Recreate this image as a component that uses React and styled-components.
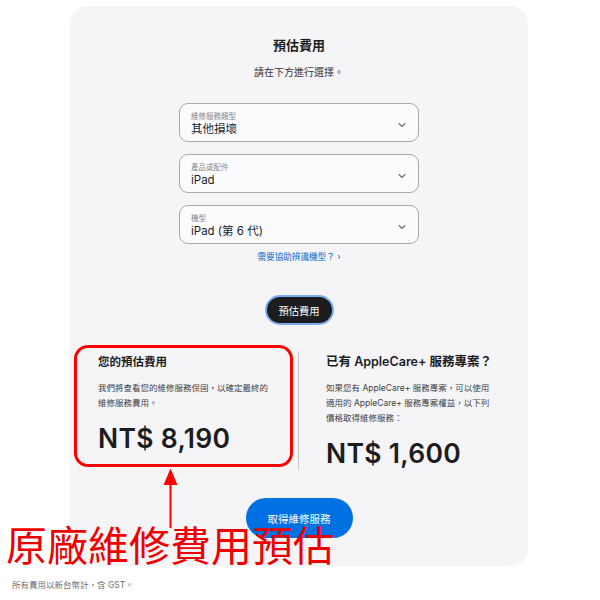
import React from "react";
import styled, { createGlobalStyle } from "styled-components";

const Global = createGlobalStyle`
  html, body { margin: 0; padding: 0; background: #fff; }
  body { font-family: "Inter", "Noto Sans CJK TC", sans-serif; color: #1d1d1f; }
`;

const Page = styled.div`
  position: relative;
  width: 600px;
  height: 600px;
  overflow: hidden;
  padding-top: 6px;
  box-sizing: border-box;
`;

const Card = styled.div`
  margin-left: 70px;
  width: 458px;
  height: 560px;
  box-sizing: border-box;
  border-radius: 18px;
  background: #f5f5f7;
  padding-top: 29px;
  display: flex;
  flex-direction: column;
  align-items: center;
`;

const Title = styled.h2`
  margin: 0;
  font-size: 13px;
  line-height: 20px;
  font-weight: 700;
`;

const Subtitle = styled.p`
  margin: 9px 0 0;
  font-size: 10px;
  line-height: 16px;
  color: #333336;
`;

const Fields = styled.div`
  margin-top: 23px;
  display: flex;
  flex-direction: column;
  gap: 12px;
`;

const Select = styled.div`
  width: 240px;
  height: 39px;
  box-sizing: border-box;
  border: 1px solid #a9a9ae;
  border-radius: 9px;
  background: #fbfbfd;
  padding: 7px 0 0 11px;
  display: flex;
  align-items: flex-start;
  justify-content: space-between;
`;

const FieldText = styled.div`
  display: flex;
  flex-direction: column;
`;

const FieldLabel = styled.span`
  font-size: 7.5px;
  line-height: 12px;
  color: #86868b;
`;

const FieldValue = styled.span`
  font-size: 11.5px;
  line-height: 13px;
  color: #1d1d1f;
`;

const Chevron = styled.svg`
  margin: 11px 12px 0 0;
  width: 8px;
  height: 6px;
`;

const HelpLink = styled.a`
  margin-top: 6px;
  font-size: 8.6px;
  line-height: 14px;
  color: #0066cc;
  text-decoration: none;
`;

const DarkButton = styled.button`
  margin-top: 31px;
  width: 69px;
  height: 30px;
  box-sizing: border-box;
  border-radius: 15px;
  border: 2px solid #79acf4;
  background: #1d1d1f;
  color: #fff;
  font-family: inherit;
  font-size: 10.3px;
  padding: 0;
`;

const Results = styled.div`
  margin-top: 26px;
  width: 100%;
  box-sizing: border-box;
  padding: 0 28px;
  display: grid;
  grid-template-columns: 173px 1px 1fr;
  column-gap: 27px;
  height: 119px;
`;

const Column = styled.div`
  padding-top: 2px;
  display: flex;
  flex-direction: column;
`;

const Divider = styled.div`
  background: #c7c7cc;
`;

const ColTitle = styled.h3`
  margin: 0;
  font-size: ${(p) => p.$size}px;
  line-height: 18px;
  font-weight: 600;
  white-space: nowrap;
`;

const ColText = styled.p`
  margin: 9.5px 0 0;
  font-size: 8.5px;
  line-height: 15px;
  color: #424245;
`;

const Price = styled.div`
  margin-top: 11px;
  font-size: 26.5px;
  line-height: 32px;
  font-weight: 600;
  letter-spacing: 0.3px;
  white-space: nowrap;
`;

const BlueButton = styled.button`
  margin-top: 28px;
  width: 107px;
  height: 40px;
  border: none;
  border-radius: 20px;
  background: #0071e3;
  color: #fff;
  font-family: inherit;
  font-size: 10.5px;
  padding: 0;
`;

const Footer = styled.p`
  margin: 12px 0 0 12px;
  font-size: 8.5px;
  line-height: 14px;
  color: #6e6e73;
`;

const Highlight = styled.div`
  position: absolute;
  left: 74px;
  top: 345px;
  width: 219px;
  height: 122px;
  box-sizing: border-box;
  border: 3px solid #ff0000;
  border-radius: 14px;
  pointer-events: none;
`;

const Arrow = styled.svg`
  position: absolute;
  left: 163px;
  top: 468px;
  width: 15px;
  height: 60px;
`;

const Caption = styled.div`
  position: absolute;
  left: 6px;
  top: 523px;
  font-family: "Noto Sans CJK TC", sans-serif;
  font-size: 41px;
  line-height: 41px;
  font-weight: 400;
  color: #ee0000;
  white-space: nowrap;
`;

function Field({ label, value }) {
  return (
    <Select>
      <FieldText>
        <FieldLabel>{label}</FieldLabel>
        <FieldValue>{value}</FieldValue>
      </FieldText>
      <Chevron viewBox="0 0 8 6">
        <path d="M1 1.5 L4 4.5 L7 1.5" fill="none" stroke="#6e6e73" strokeWidth="1.1" strokeLinecap="round" strokeLinejoin="round" />
      </Chevron>
    </Select>
  );
}

export default function App() {
  return (
    <>
      <Global />
      <Page>
        <Card>
          <Title>預估費用</Title>
          <Subtitle>請在下方進行選擇。</Subtitle>
          <Fields>
            <Field label="維修服務類型" value="其他損壞" />
            <Field label="產品或配件" value="iPad" />
            <Field label="機型" value="iPad (第 6 代)" />
          </Fields>
          <HelpLink href="#">需要協助辨識機型？ ›</HelpLink>
          <DarkButton>預估費用</DarkButton>
          <Results>
            <Column>
              <ColTitle $size={11.5}>您的預估費用</ColTitle>
              <ColText>我們將查看您的維修服務保固，以確定最終的維修服務費用。</ColText>
              <Price>NT$ 8,190</Price>
            </Column>
            <Divider />
            <Column>
              <ColTitle $size={12.5}>已有 AppleCare+ 服務專案？</ColTitle>
              <ColText>
                如果您有 AppleCare+ 服務專案，可以使用
                <br />
                適用的 AppleCare+ 服務專案權益，以下列
                <br />
                價格取得維修服務：
              </ColText>
              <Price>NT$ 1,600</Price>
            </Column>
          </Results>
          <BlueButton>取得維修服務</BlueButton>
        </Card>
        <Footer>所有費用以新台幣計，含 GST。</Footer>
        <Highlight />
        <Arrow viewBox="0 0 15 60">
          <line x1="7.5" y1="12" x2="7.5" y2="60" stroke="#ff0000" strokeWidth="2" />
          <polygon points="0.5,17 7.5,0.5 14.5,17" fill="#ff0000" />
        </Arrow>
        <Caption>原廠維修費用預估</Caption>
      </Page>
    </>
  );
}
